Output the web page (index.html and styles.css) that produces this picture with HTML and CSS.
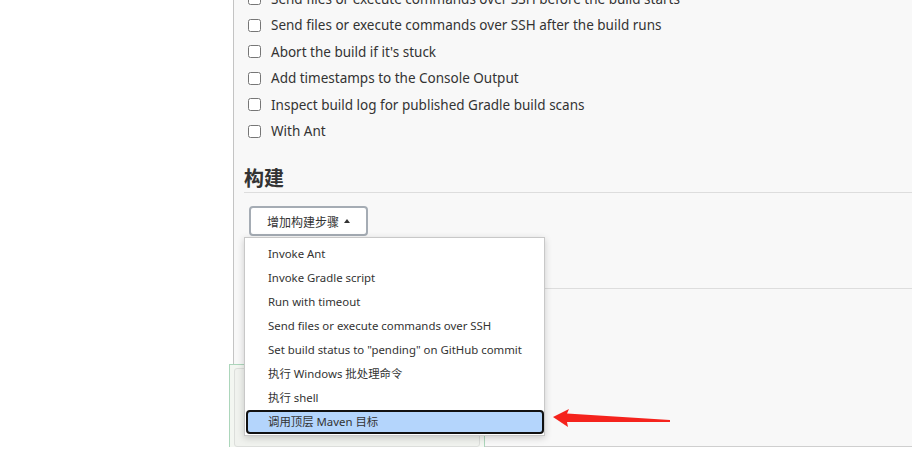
FILE: index.html
```html
<!DOCTYPE html>
<html lang="zh-CN">
<head>
<meta charset="utf-8">
<title>构建</title>
<link rel="stylesheet" href="styles.css">
</head>
<body>
<div class="page">
  <aside class="sidebar"></aside>
  <main class="main">
    <div class="options">
      <label class="opt"><input type="checkbox"><span>Send files or execute commands over SSH before the build starts</span></label>
      <label class="opt"><input type="checkbox"><span>Send files or execute commands over SSH after the build runs</span></label>
      <label class="opt"><input type="checkbox"><span>Abort the build if it's stuck</span></label>
      <label class="opt"><input type="checkbox"><span>Add timestamps to the Console Output</span></label>
      <label class="opt"><input type="checkbox"><span>Inspect build log for published Gradle build scans</span></label>
      <label class="opt"><input type="checkbox"><span>With Ant</span></label>
    </div>
    <section class="section">
      <h2 class="section-title">构建</h2>
      <div class="actions">
        <button class="add-btn" type="button">增加构建步骤<span class="caret"></span></button>
        <ul class="dropdown">
          <li class="item">Invoke Ant</li>
          <li class="item">Invoke Gradle script</li>
          <li class="item">Run with timeout</li>
          <li class="item">Send files or execute commands over SSH</li>
          <li class="item">Set build status to "pending" on GitHub commit</li>
          <li class="item">执行 Windows 批处理命令</li>
          <li class="item">执行 shell</li>
          <li class="item selected">调用顶层 Maven 目标</li>
        </ul>
      </div>
    </section>
    <div class="next-section"></div>
  </main>
  <div class="save-bar"><div class="save-inner"></div></div>
  <svg class="arrow" width="125" height="25" viewBox="0 0 125 25" aria-hidden="true">
    <polygon points="3,12 19,4 17,8.5 120,15 120,17 17,17 18,22" fill="#f5231d"/>
  </svg>
</div>
</body>
</html>
```
FILE: styles.css
```css
* { box-sizing: border-box; }
body {
  margin: 0;
  background: #fff;
  font-family: "Noto Sans", "Noto Sans CJK SC", sans-serif;
  color: #333;
}
.page {
  display: flex;
  height: 447px;
  position: relative;
}
.sidebar {
  width: 234px;
  flex: none;
  border-right: 1px solid #c4c4c4;
}
.main {
  flex: 1;
  background: #f8f8f8;
  border-bottom: 1px solid #cfcfcf;
  overflow: hidden;
  padding-left: 10px;
}
.options {
  margin-top: -14.5px;
}
.opt {
  display: flex;
  align-items: center;
  height: 26.5px;
  font-size: 13.5px;
  color: #333;
}
.opt input {
  width: 13px;
  height: 13px;
  margin: 0 10px 0 4px;
}
.section-title {
  margin: 20.5px 0 0;
  font-family: "Noto Sans CJK SC", sans-serif;
  font-size: 20px;
  font-weight: 700;
  line-height: 26px;
  padding-bottom: 1px;
  border-bottom: 1px solid #dddddd;
  color: #333;
}
.actions {
  position: relative;
  padding: 13px 0 0 5px;
  height: 43px;
}
.add-btn {
  display: flex;
  align-items: center;
  width: 119px;
  height: 30px;
  padding: 0 0 0 16px;
  border: 2px solid #a5acb4;
  border-radius: 4px;
  background: #fff;
  font-family: "Noto Sans CJK SC", sans-serif;
  font-size: 12px;
  color: #333;
}
.caret {
  width: 0;
  height: 0;
  margin-left: 5px;
  border-left: 3.5px solid transparent;
  border-right: 3.5px solid transparent;
  border-bottom: 4px solid #333;
}
.dropdown {
  position: absolute;
  left: 0;
  top: 44px;
  z-index: 3;
  width: 301px;
  margin: 0;
  padding: 4px 0 1px;
  list-style: none;
  background: #fff;
  border: 1px solid #c8c8c8;
  box-shadow: 0 2px 7px rgba(0, 0, 0, 0.18);
}
.item {
  height: 24px;
  line-height: 24px;
  padding-left: 23px;
  font-size: 11.4px;
  font-family: "Noto Sans", "Noto Sans CJK SC", sans-serif;
  color: #333;
  white-space: nowrap;
}
.item.selected {
  margin-left: 1px;
  padding-left: 20px;
  line-height: 20px;
  border: 2px solid #111;
  border-radius: 4px;
  background: #b4d5fc;
}
.next-section {
  margin-top: 52px;
  border-top: 1px solid #dddddd;
}
.save-bar {
  position: absolute;
  left: 229px;
  top: 364px;
  z-index: 2;
  width: 256px;
  height: 87px;
  padding: 3px 4px 3px 4px;
  border: 1px solid #acd6bb;
  background: #f3f6f1;
}
.save-inner {
  height: 100%;
  border: 1px solid #dcdedb;
  border-radius: 3px;
  background: #f0f2ee;
}
.arrow {
  position: absolute;
  left: 550px;
  top: 405px;
  z-index: 4;
}
```
